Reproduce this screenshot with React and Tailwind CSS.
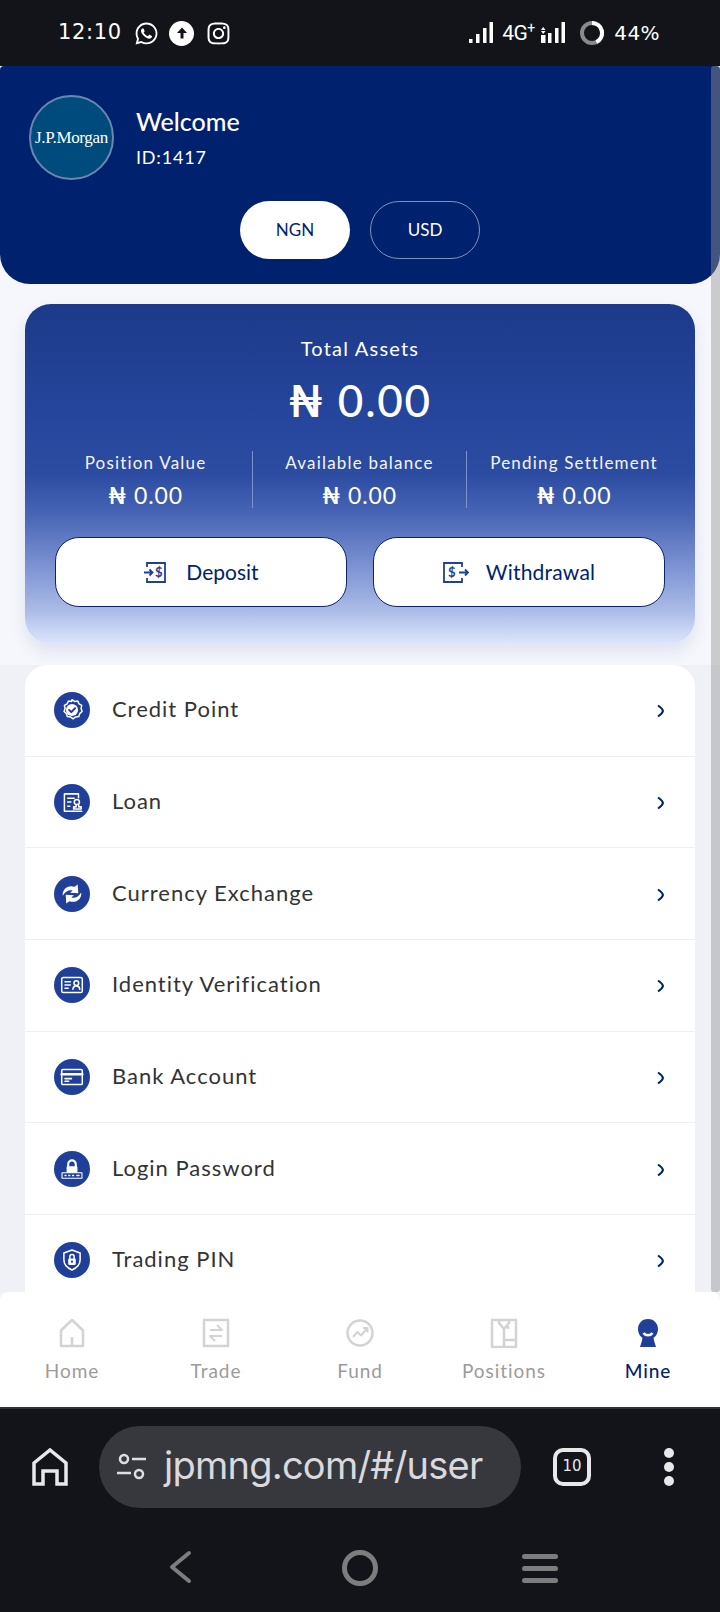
import { FaWhatsapp, FaInstagram } from 'react-icons/fa'

const font = { hand: "font-['Lato','DejaVu_Sans',sans-serif]" }

const NairaStat = ({ label, value }) => (
  <div className="flex flex-col items-center justify-center text-white">
    <div className="text-[17px] leading-[24px] tracking-[0.07em] opacity-95">{label}</div>
    <div className="mt-[7px] text-[23px] leading-[26px] tracking-[0.04em]"><b>₦</b> {value}</div>
  </div>
)

const CircleIcon = ({ children }) => (
  <div className="flex h-9 w-9 shrink-0 items-center justify-center rounded-full bg-[#1f3f98]">
    <svg width="26" height="26" viewBox="0 0 24 24" fill="none" stroke="white" strokeWidth="1.4" strokeLinecap="round" strokeLinejoin="round">
      {children}
    </svg>
  </div>
)

const menu = [
  {
    name: 'Credit Point',
    icon: (
      <>
        <path d="M12 2.500l2.400 1.600 2.900-.3 1.200 2.600 2.500 1.400-.6 2.900.9 2.700-2.200 1.900-.8 2.800-2.900.3-2.400 1.700-2.400-1.700-2.900-.3-.8-2.800-2.200-1.900.9-2.700-.6-2.900 2.500-1.400 1.200-2.600 2.900.3z" />
        <circle cx="12" cy="12" r="5.600" fill="white" stroke="none" />
        <path d="M9.400 12l2 2 3.400-3.600" stroke="#1f3f98" strokeWidth="1.800" />
      </>
    ),
  },
  {
    name: 'Loan',
    icon: (
      <>
        <path d="M18 8V4.500H5v16h8" />
        <path d="M8 8.500h6M8 12h3M8 16h2" />
        <circle cx="16.500" cy="12" r="2.400" />
        <path d="M15.800 14.500v2h-2.300v2h7v-2h-2.300v-2M13 20.500h8" />
      </>
    ),
  },
  {
    name: 'Currency Exchange',
    icon: (
      <>
        <path d="M3.500 13.500c-.8-5.800 4.800-10.300 10.800-8.100l3-2.100.5 8-7.600-.5 2.400-2c-3.700-1-6.700.9-9.100 4.700z" fill="white" stroke="none" />
        <path d="M20.500 10.500c.8 5.800-4.800 10.300-10.800 8.100l-3 2.100-.5-8 7.600.5-2.400 2c3.700 1 6.700-.9 9.100-4.700z" fill="white" stroke="none" />
      </>
    ),
  },
  {
    name: 'Identity Verification',
    icon: (
      <>
        <rect x="2.500" y="5" width="19" height="14" rx="1.500" />
        <path d="M5.500 9h5M5.500 12h5M5.500 15h3" />
        <circle cx="16" cy="10.200" r="2.200" />
        <path d="M12.800 16c.3-2 1.500-3.200 3.200-3.200s2.900 1.200 3.200 3.200" />
      </>
    ),
  },
  {
    name: 'Bank Account',
    icon: (
      <>
        <rect x="2.500" y="5" width="19" height="14" rx="1" />
        <path d="M2.500 9.500h19" strokeWidth="2.200" />
        <path d="M5.500 13.500h6M5.500 16h3.500" />
      </>
    ),
  },
  {
    name: 'Login Password',
    icon: (
      <>
        <path d="M8.500 10V7.500a3.500 3.500 0 017 0V10" strokeWidth="2" />
        <rect x="7" y="9.500" width="10" height="6" rx="1" fill="white" stroke="none" />
        <rect x="2.800" y="15.500" width="18.400" height="5" stroke="white" strokeWidth="1" />
        <path d="M5.500 18h1M9 18h1M12.500 18h1M16.500 18h2" strokeWidth="1.200" />
      </>
    ),
  },
  {
    name: 'Trading PIN',
    icon: (
      <>
        <path d="M12 2.800l7.500 2.700v6.300c0 4.400-3 7.500-7.500 9.400-4.500-1.900-7.500-5-7.500-9.400V5.500z" />
        <rect x="8.500" y="10.500" width="7" height="6" rx="1" fill="white" stroke="none" />
        <path d="M10 10.500V9a2 2 0 014 0v1.500" />
        <circle cx="12" cy="13.500" r="1" fill="#1f3f98" stroke="none" />
      </>
    ),
  },
]

const navIcons = {
  Home: <path d="M3 12.500L14 2l11 10.500V28H3zM14 28v-9" />,
  Trade: (
    <>
      <rect x="2" y="2" width="24" height="26" />
      <path d="M8 12h12l-5-5M20 18H8l5 5" strokeWidth="2" />
    </>
  ),
  Fund: (
    <>
      <circle cx="14" cy="15" r="12.500" />
      <path d="M7 19l4.500-5 3.500 3.500 6-7M17 10h4.500v4.500" strokeWidth="2" />
    </>
  ),
  Positions: (
    <>
      <path d="M9 2H2v27h24V2h-7M9 2h10v3l-5 6-5-6z" />
      <path d="M14 11v11h12M14 22v7M18 11V8" />
    </>
  ),
}

const tabs = ['Home', 'Trade', 'Fund', 'Positions']

function App() {
  return (
    <div className={`${font.hand} relative flex h-[1612px] w-[720px] flex-col overflow-hidden bg-[#f5f7fc]`}>
      {/* status bar */}
      <div className="flex h-[66px] shrink-0 items-center justify-between bg-[#12141a] pl-[58px] pr-[60px] text-white">
        <div className="flex items-center">
          <span className="w-[76px] font-['DejaVu_Sans',sans-serif] text-[21px] tracking-[0.03em]">12:10</span>
          <FaWhatsapp className="text-[25px]" />
          <div className="ml-[10px] flex h-[25px] w-[25px] items-center justify-center rounded-full bg-white">
            <svg width="14" height="14" viewBox="0 0 14 14" fill="#12141a"><path d="M7 1.500L12 7H8.500v5.500h-3V7H2z" /></svg>
          </div>
          <FaInstagram className="ml-[12px] text-[25px]" />
        </div>
        <div className="flex items-center">
          <svg width="24" height="22" viewBox="0 0 24 22" fill="white"><path d="M0 17h3.500v4H0zM7 12h3.500v9H7zM14 6h3.500v15H14zM20.500 0H24v21h-3.500z" /></svg>
          <span className="ml-[9px] w-[39px] font-['Roboto',sans-serif] text-[21px] leading-none tracking-[-0.03em]">4G<sup className="text-[14px]">+</sup></span>
          <svg width="24" height="22" viewBox="0 0 24 22" fill="white"><path d="M0 13h4.500v8H0zM7 11h3.500v10H7zM14 6h3.500v15H14zM20.500 0H24v21h-3.500zM2.200 5l2.300 3H0zM2.200 12L0 9h4.500z" /></svg>
          <svg className="ml-[15px]" width="24" height="24" viewBox="0 0 24 24" fill="none" strokeWidth="4">
            <circle cx="12" cy="12" r="10" stroke="#8a8a8a" />
            <path d="M12 2a10 10 0 014.400 19" stroke="white" />
          </svg>
          <span className="ml-[10px] font-['DejaVu_Sans',sans-serif] text-[20px] tracking-[0.02em]">44%</span>
        </div>
      </div>

      {/* page */}
      <div className="relative min-h-0 flex-1 overflow-hidden">
        <div className="flex h-[218px] flex-col rounded-b-[30px] rounded-t-[4px] bg-[#00226e] px-[29px] pt-[29px]">
          <div className="flex items-center">
            <div className="flex h-[85px] w-[85px] items-center justify-center rounded-full border-2 border-[#6d86ad] bg-[#004b7d]">
              <span className="font-['Liberation_Serif',serif] text-[17px] tracking-[-0.02em] text-white">J.P.Morgan</span>
            </div>
            <div className="-mt-[2px] ml-[22px] text-white">
              <div className="text-[25px] font-medium leading-[30px]">Welcome</div>
              <div className="mt-[10px] text-[18px] leading-[22px] tracking-[0.045em]">ID:1417</div>
            </div>
          </div>
          <div className="mt-[21px] flex justify-center gap-5">
            <button className="h-[58px] w-[110px] rounded-[29px] bg-white text-[17px] text-[#00226e]">NGN</button>
            <button className="h-[58px] w-[110px] rounded-[29px] border border-[#8193b8] text-[17px] text-white">USD</button>
          </div>
        </div>

        <div className="px-[25px] pb-[21px] pt-5">
          <div className="flex h-[340px] flex-col rounded-[26px] bg-[linear-gradient(180deg,#1d3a89_0%,#24459b_30%,#2c4ca2_50%,#4865b5_62%,#7f95d4_78%,#aabbe6_90%,#dce6fc_100%)] px-[30px] pt-[30px] shadow-[0_8px_16px_rgba(30,50,110,0.1)]">
            <div className="text-center text-[20px] leading-[28px] tracking-[0.06em] text-white">Total Assets</div>
            <div className="mt-[12px] text-center text-[44px] font-medium leading-[52px] tracking-[0.04em] text-white"><b>₦</b> 0.00</div>
            <div className="-mx-4 mt-[25px] grid h-[57px] grid-cols-3">
              <div className="border-r border-[#7d92cc]"><NairaStat label="Position Value" value="0.00" /></div>
              <div className="border-r border-[#7d92cc]"><NairaStat label="Available balance" value="0.00" /></div>
              <NairaStat label="Pending Settlement" value="0.00" />
            </div>
            <div className="mt-[29px] grid grid-cols-2 gap-[26px]">
              <button className="flex h-[70px] items-center justify-center gap-[19px] rounded-[24px] border border-[#0c2468] bg-white text-[21px] text-[#00226e]">
                <svg width="24" height="24" viewBox="0 0 24 24" fill="none" stroke="#1f3f98" strokeWidth="1.800">
                  <path d="M4 7V3h18v19H4v-4M1 12.500h8M6.500 9.500l3 3-3 3" />
                  <text x="12" y="17" fontSize="13" fontWeight="700" fill="#1f3f98" stroke="none">$</text>
                </svg>
                Deposit
              </button>
              <button className="flex h-[70px] items-center justify-center gap-[17px] rounded-[24px] border border-[#0c2468] bg-white text-[21px] tracking-[0.01em] text-[#00226e]">
                <svg width="26" height="24" viewBox="0 0 26 24" fill="none" stroke="#1f3f98" strokeWidth="1.800">
                  <path d="M19 7V3H1v19h18v-4M16 12.500h9M22 9.500l3 3-3 3" />
                  <text x="5" y="17" fontSize="13" fontWeight="700" fill="#1f3f98" stroke="none">$</text>
                </svg>
                Withdrawal
              </button>
            </div>
          </div>
        </div>

        <div className="bg-[#eff1f6] px-[25px]">
          <div className="rounded-t-[22px] bg-white">
            {menu.map((item) => (
              <div key={item.name} className="flex h-[91.700px] items-center border-b border-[#eeeff3] pl-[29px] pr-[30px]">
                <CircleIcon>{item.icon}</CircleIcon>
                <span className="mb-[3px] ml-[22px] flex-1 text-[22px] tracking-[0.045em] text-[#333333]">{item.name}</span>
                <svg className="mt-[2px]" width="9" height="14" viewBox="0 0 9 14" fill="none" stroke="#00226e" strokeWidth="2"><path d="M2 1.500c3 2 4.500 3.500 5 5.500-.5 2-2 3.500-5 5.500" /></svg>
              </div>
            ))}
          </div>
        </div>

        {/* scrollbar */}
        <div className="absolute bottom-0 right-0 top-0 w-[9px] rounded-[3px] bg-[#949494]/45" />
      </div>

      {/* bottom tabs */}
      <div className="grid h-[115px] shrink-0 grid-cols-5 rounded-t-[8px] bg-white shadow-[0_-6px_10px_rgba(40,50,80,0.04)]">
        {tabs.map((tab) => (
          <div key={tab} className="flex flex-col items-center pt-[26px]">
            <svg width="28" height="30" viewBox="0 0 28 30" fill="none" stroke="#d3d3d3" strokeWidth="2.500" strokeLinejoin="round">{navIcons[tab]}</svg>
            <span className="mt-[11px] text-[19px] leading-[24px] tracking-[0.05em] text-[#9b9b9b]">{tab}</span>
          </div>
        ))}
        <div className="flex flex-col items-center pt-[26px]">
          <svg width="28" height="30" viewBox="0 0 28 30" fill="#1f3f98">
            <path d="M14 1c6.500 0 10 5 10 10 0 4.500-2.500 7.500-4.500 9 .5 3 1.500 6 2.500 9H6c1-3 2-6 2.500-9C6.500 18.500 4 15.500 4 11 4 6 7.500 1 14 1z" />
            <path d="M9.500 15c2 3 7 3 9 0" stroke="white" strokeWidth="2.500" fill="none" />
          </svg>
          <span className="mt-[11px] text-[19px] font-medium leading-[24px] tracking-[0.05em] text-[#00226e]">Mine</span>
        </div>
      </div>

      {/* browser bar */}
      <div className="flex h-[205px] shrink-0 flex-col border-t-2 border-[#2f3136] bg-[#12141a]">
        <div className="flex h-[115px] shrink-0 items-center">
          <svg className="ml-[32px] shrink-0" width="36" height="38" viewBox="0 0 36 38" fill="none" stroke="#e8e8ea" strokeWidth="3.500">
            <path d="M2 36V15L18 2l16 13v21h-9V23H11v13z" />
          </svg>
          <div className="ml-[31px] flex h-[82px] w-[422px] items-center rounded-[41px] bg-[#36383e] pl-[17px]">
            <svg width="32" height="32" viewBox="0 0 32 32" fill="none" stroke="#dfdfe3" strokeWidth="2.500">
              <circle cx="8" cy="8" r="4" />
              <path d="M16 8h14M1 22h14" />
              <circle cx="23" cy="23" r="4" />
            </svg>
            <span className="mb-[3px] ml-[16px] font-['Inter',sans-serif] text-[38px] tracking-[-0.02em] text-[#d9d9de]">jpmng.com/#/user</span>
          </div>
          <div className="ml-[32px] flex h-[38px] w-[38px] items-center justify-center rounded-[10px] border-[4px] border-[#e8e8ea] font-['DejaVu_Sans',sans-serif] text-[15px] text-[#e8e8ea]">10</div>
          <div className="ml-[73px] flex flex-col gap-[4px]">
            <div className="h-[10px] w-[10px] rounded-full bg-[#e8e8ea]" />
            <div className="h-[10px] w-[10px] rounded-full bg-[#e8e8ea]" />
            <div className="h-[10px] w-[10px] rounded-full bg-[#e8e8ea]" />
          </div>
        </div>
        <div className="grid grid-cols-3 px-[90px] pt-[26px]">
          <div className="flex justify-center">
            <svg width="24" height="34" viewBox="0 0 24 34" fill="none" stroke="#7d7d7f" strokeWidth="4" strokeLinecap="round" strokeLinejoin="round"><path d="M21 3L4 17l17 14" /></svg>
          </div>
          <div className="flex justify-center">
            <div className="h-[36px] w-[36px] rounded-full border-[5px] border-[#7d7d7f]" />
          </div>
          <div className="flex flex-col items-center gap-[7px] pt-[4px]">
            <div className="h-[5px] w-[36px] rounded-full bg-[#7d7d7f]" />
            <div className="h-[5px] w-[36px] rounded-full bg-[#7d7d7f]" />
            <div className="h-[5px] w-[36px] rounded-full bg-[#7d7d7f]" />
          </div>
        </div>
      </div>
    </div>
  )
}

export default App
